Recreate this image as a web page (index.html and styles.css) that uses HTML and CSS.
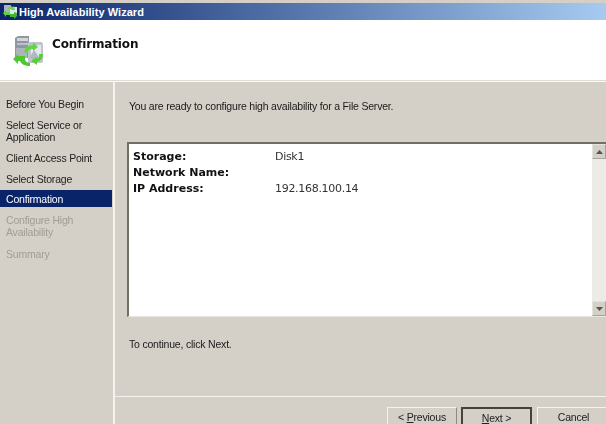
FILE: index.html
```html
<!DOCTYPE html>
<html lang="en">
<head>
<meta charset="utf-8">
<title>High Availability Wizard</title>
<link rel="stylesheet" href="styles.css">
</head>
<body>
<div class="window">
  <div class="titlebar">
    <svg class="title-icon" width="15" height="15" viewBox="0 0 15 15">
      <rect x="1" y="1" width="7" height="9" fill="#a9b4bd"/>
      <rect x="7" y="3" width="7" height="9" fill="#dfe6ea"/>
      <path d="M0 9l3-3v2h4v3H3v2z" fill="#5fd03e"/>
      <path d="M14 9v3l-3 3v-2H7v-3h4V8z" fill="#3fb82c"/>
      <path d="M5 5c1-2 3-3 5-2l1-1 1 4-4 0 1-1c-1 0-2 0-3 1z" fill="#6ed84c"/>
    </svg>
    <span class="title-text">High Availability Wizard</span>
  </div>
  <header class="header">
    <svg class="header-icon" width="32" height="32" viewBox="0 0 32 32">
      <path d="M2 2l3-2h11v22H2z" fill="#8f98a2"/>
      <rect x="4" y="2" width="11" height="3" fill="#d2d6da"/>
      <rect x="4" y="7" width="11" height="2" fill="#bcc2c8"/>
      <rect x="3" y="12" width="11" height="10" fill="#adb4bb"/>
      <path d="M15 6h14l1 2v18l-2 1H15z" fill="#bfc5cc"/>
      <rect x="18" y="9" width="10" height="15" fill="#e6e9ec"/>
      <path d="M21 14l3 4 3 6h-8l-2-3z" fill="#aeb8c4"/>
      <path d="M11 16c1-4 4-7 9-7V6l5 5-5 4v-2c-3 0-5 1-5 4z" fill="#63d53f"/>
      <path d="M0 23l5-5v2h7v4c1 2 3 3 5 3v3c-5 0-9-2-10-5H5v3z" fill="#4fc82f"/>
      <path d="M26 18h4c0 4-2 7-6 8v3l-6-4 6-4v2c2-1 2-3 2-5z" fill="#58cd38"/>
    </svg>
    <h1 class="header-title">Confirmation</h1>
  </header>
  <div class="body">
    <nav class="steps">
      <div class="step">Before You Begin</div>
      <div class="step">Select Service or Application</div>
      <div class="step">Client Access Point</div>
      <div class="step">Select Storage</div>
      <div class="step current">Confirmation</div>
      <div class="step disabled">Configure High Availability</div>
      <div class="step disabled last">Summary</div>
    </nav>
    <main class="main">
      <div class="content">
        <p class="intro">You are ready to configure high availability for a File Server.</p>
        <div class="report">
          <div class="report-text">
            <div class="row"><b class="key">Storage:</b><span class="val">Disk1</span></div>
            <div class="row"><b class="key">Network Name:</b><span class="val"></span></div>
            <div class="row"><b class="key">IP Address:</b><span class="val">192.168.100.14</span></div>
          </div>
          <div class="scrollbar">
            <div class="sb-btn"><svg width="7" height="4" viewBox="0 0 7 4"><path d="M3.500 0L7 4H0z" fill="#55534e"/></svg></div>
            <div class="sb-track"></div>
            <div class="sb-btn"><svg width="7" height="4" viewBox="0 0 7 4"><path d="M0 0h7L3.500 4z" fill="#55534e"/></svg></div>
          </div>
        </div>
        <p class="outro">To continue, click Next.</p>
      </div>
      <footer class="footer">
        <button class="btn" type="button">&lt; <u>P</u>revious</button>
        <button class="btn default" type="button"><u>N</u>ext &gt;</button>
        <button class="btn cancel" type="button">Cancel</button>
      </footer>
    </main>
  </div>
</div>
</body>
</html>
```
FILE: styles.css
```css
* { box-sizing: border-box; }
html, body { margin: 0; padding: 0; }
body { width: 606px; height: 424px; overflow: hidden; background: #d4d0c8; font-family: "Liberation Sans", Arial, sans-serif; font-size: 10.5px; letter-spacing: -0.2px; color: #1a1a1a; }
.window { width: 606px; height: 424px; display: flex; flex-direction: column; overflow: hidden; padding-top: 3px; filter: blur(0.35px); }
.titlebar { height: 17px; flex: none; display: flex; align-items: center; gap: 1px; padding: 0 0 0 3px; background: linear-gradient(to right, #0a246a, #a6caf0); }
.title-icon { flex: none; }
.title-text { color: #fff; font-family: "Liberation Sans", sans-serif; font-weight: bold; font-size: 11px; letter-spacing: 0.05px; }
.header { height: 61px; flex: none; display: flex; align-items: flex-start; background: #fff; padding: 16px 0 0 13px; border-bottom: 1px solid #dedcd6; }
.header-icon { flex: none; }
.header-title { margin: 1px 0 0 7px; font-family: "DejaVu Sans", sans-serif; font-size: 12px; line-height: 15px; font-weight: bold; color: #111; letter-spacing: -0.15px; }
.body { flex: 1; display: flex; border-top: 1px solid #fbfbfa; min-height: 0; }
.steps { width: 115px; flex: none; border-right: 2px solid #f4f3f0; padding-top: 16px; display: flex; flex-direction: column; gap: 9px; }
.step { padding: 0 6px; line-height: 12px; color: #222; width: 112px; }
.step.current { background: #0a246a; color: #fff; height: 17px; line-height: 19px; margin: -4px 0 -2px; }
.step.disabled { color: #a09d96; }
.step.last { margin-top: 1px; }
.main { flex: 1; display: flex; flex-direction: column; min-width: 0; }
.content { flex: 1; padding: 18px 0 0 12px; display: flex; flex-direction: column; }
.intro, .outro { margin: 0 0 0 2px; line-height: 13px; }
.report { margin-top: 29px; height: 175px; flex: none; display: flex; background: #fff; border: 2px solid #716f64; border-right: 0; border-bottom: 1px solid #e8e6e0; }
.report-text { flex: 1; padding: 5px 0 0 4px; font-family: "DejaVu Sans", sans-serif; font-size: 11px; letter-spacing: 0; color: #111; }
.row { display: flex; height: 16px; line-height: 16px; }
.key { width: 142px; flex: none; }
.val { color: #333; letter-spacing: -0.3px; }
.scrollbar { width: 14px; flex: none; display: flex; flex-direction: column; background: #ecebe6; }
.sb-btn { height: 15px; flex: none; display: flex; align-items: center; justify-content: center; background: #d4d0c8; border: 1px solid #e4e2dc; border-right-color: #a8a49c; border-bottom-color: #a8a49c; }
.sb-track { flex: 1; }
.outro { margin-top: 21px; }
.footer { height: 28px; flex: none; border-top: 1px solid #f4f3f0; display: flex; align-items: flex-start; gap: 4px; padding: 10px 0 0 272px; }
.btn { width: 70px; height: 30px; flex: none; padding: 0 0 10px 0; background: #d4d0c8; border: 1px solid #f4f3ef; border-right-color: #8c8a82; font-family: "Liberation Sans", Arial, sans-serif; font-size: 10.5px; letter-spacing: -0.2px; color: #222; }
.btn.default { width: 71px; border: 2px solid #44423c; border-bottom: 0; }
.btn.cancel { width: 73px; margin-left: 1px; }
```
